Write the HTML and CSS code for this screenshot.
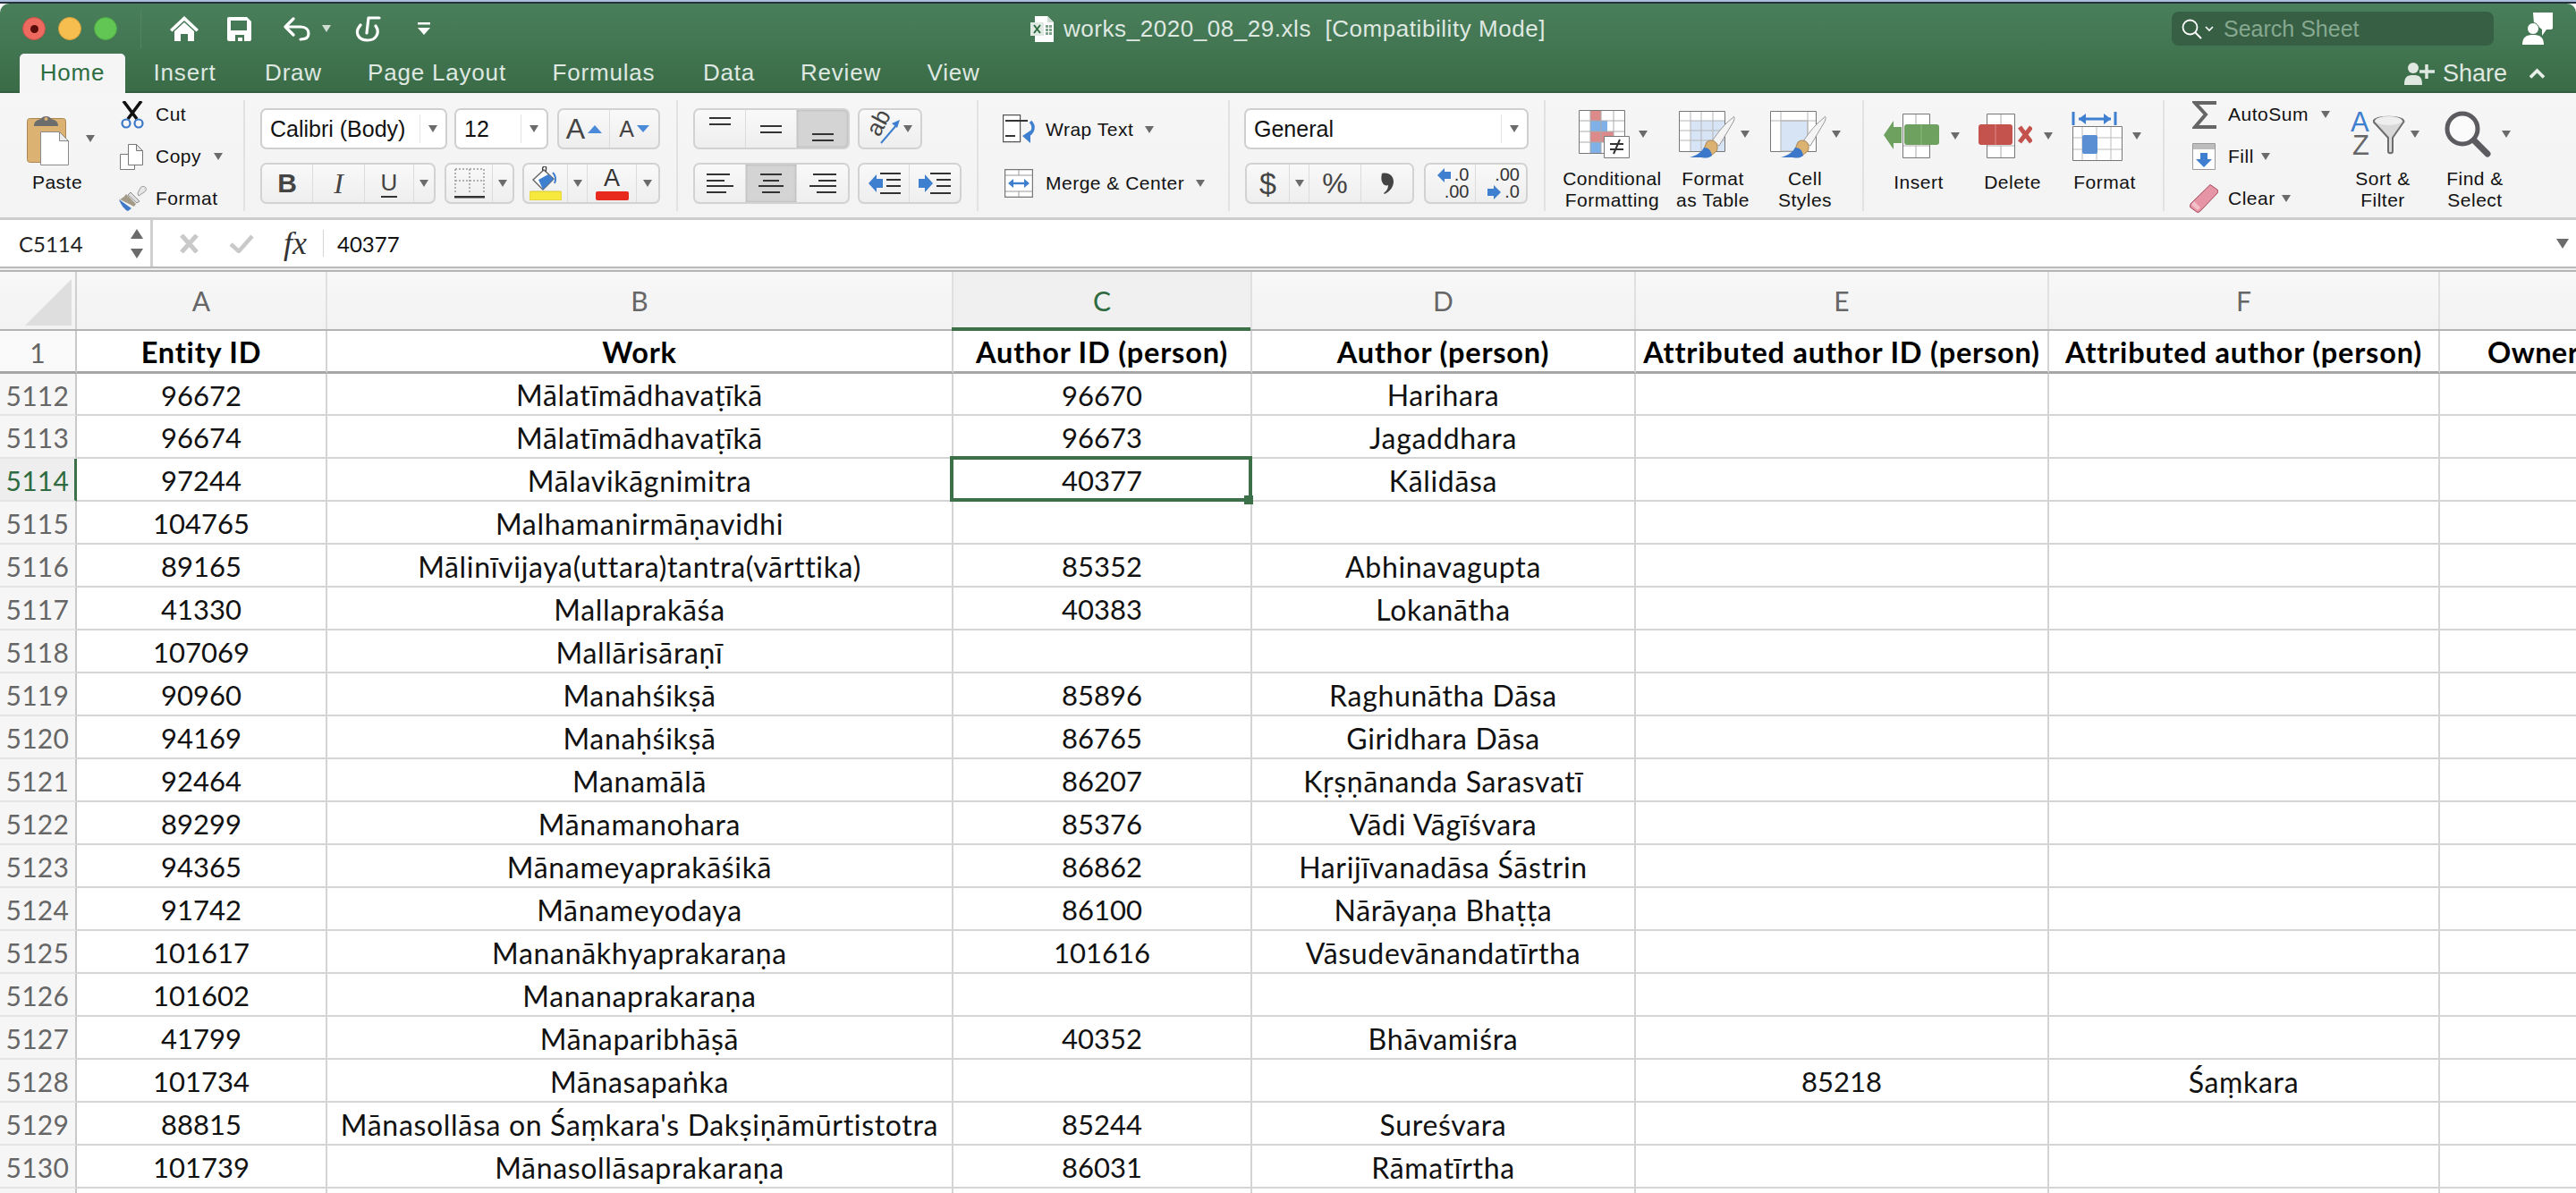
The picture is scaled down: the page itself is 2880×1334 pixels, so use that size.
FILE: index.html
```html
<!DOCTYPE html>
<html lang="en">
<head>
<meta charset="utf-8">
<title>works_2020_08_29.xls</title>
<link rel="stylesheet" href="styles.css">
</head>
<body>
<div class="topstrip"></div>
<header class="chrome">
  <div class="titlerow">
    <div class="qat">
      <span class="light red"><i></i></span><span class="light amber"></span><span class="light green"></span>
      <span class="qsep"></span>
      <svg class="q-home" width="32" height="28" viewBox="0 0 32 28"><path fill="#fff" d="M16 0 32 15l-2.500 2.500L16 5 2.500 17.500 0 15Z"/><path fill="#fff" d="M5 17 16 7l11 10v11h-7v-8h-8v8H5Z"/></svg>
      <svg class="q-save" width="27" height="27" viewBox="0 0 27 27"><path fill="#fff" fill-rule="evenodd" d="M2 0h20l5 5v20a2 2 0 0 1-2 2H2a2 2 0 0 1-2-2V2a2 2 0 0 1 2-2Zm2 4v11h18V4ZM9 20v7h3v-4h5v4h2v-7Z"/></svg>
      <svg class="q-undo" width="31" height="27" viewBox="0 0 31 27"><path fill="none" stroke="#fff" stroke-width="3.200" stroke-linecap="round" stroke-linejoin="round" d="M12 2 3 11l9 9M3 11h17c6 0 9 3.500 9 7.500S26 25 20 25"/></svg>
      <span class="caret caret-white q-car"></span>
      <svg class="q-redo" width="30" height="29" viewBox="0 0 30 29"><path fill="none" stroke="#fff" stroke-width="3.200" stroke-linecap="round" stroke-linejoin="round" d="M7 10C0 18 4 27 15 27c10 0 14-9 9-16M14 19 16 2h12"/></svg>
      <svg class="q-more" width="14" height="14" viewBox="0 0 14 14"><path fill="#fff" d="M0 0h14v2.500H0ZM0 6h14l-7 8Z"/></svg>
    </div>
    <div class="doctitle">
      <svg width="26" height="29" viewBox="0 0 26 29"><path fill="#fff" d="M5 0h14l7 7v22H5Z"/><path fill="#cfdcd2" d="M19 0v7h7Z"/><rect x="0" y="7" width="15" height="15" fill="#dfe8e1"/><path stroke="#2f6b41" stroke-width="2" fill="none" d="m4 10 7 9M11 10l-7 9"/><path fill="#7fa18a" d="M17 10h3v3h-3ZM21 10h3v3h-3ZM17 14h3v3h-3ZM21 14h3v3h-3ZM17 18h3v3h-3ZM21 18h3v3h-3Z"/></svg>
      <span class="doctext">works_2020_08_29.xls&nbsp; [Compatibility Mode]</span>
    </div>
    <div class="search">
      <svg width="24" height="23" viewBox="0 0 24 23"><circle cx="9.500" cy="9.500" r="8" fill="none" stroke="#fff" stroke-width="1.800"/><path stroke="#fff" stroke-width="2" d="m15 15 7 7"/></svg>
      <svg width="10" height="7" viewBox="0 0 10 7"><path fill="none" stroke="#fff" stroke-width="1.600" d="m1 1 4 4 4-4"/></svg>
      <span class="searchtext">Search Sheet</span>
    </div>
    <svg class="profile" width="34" height="36" viewBox="0 0 34 36"><path fill="#fff" d="M12 0h22v17a2 2 0 0 1-2 2h-5l-5 7v-7c-2-2-5-4-9-6.500Z"/><circle cx="12" cy="18" r="6.500" fill="#fff" stroke="#3f7350" stroke-width="1"/><path fill="#fff" d="M0 36c0-9 5-11 12-11s12 2 12 11Z"/></svg>
  </div>
  <div class="tabrow">
    <nav class="tabs">
      <span class="tab active">Home</span><span class="tab">Insert</span><span class="tab">Draw</span><span class="tab">Page Layout</span><span class="tab">Formulas</span><span class="tab">Data</span><span class="tab">Review</span><span class="tab">View</span>
    </nav>
    <div class="share">
      <svg width="34" height="25" viewBox="0 0 34 25"><circle cx="10" cy="6" r="6" fill="#e0e8e2"/><path fill="#e0e8e2" d="M0 25c0-9 3-11 10-11s10 2 10 11Z"/><path stroke="#e0e8e2" stroke-width="3.500" d="M25 2v16M17 10h17"/></svg>
      <span class="sharetext">Share</span>
      <svg class="sharechev" width="19" height="12" viewBox="0 0 19 12"><path fill="none" stroke="#e8eee9" stroke-width="3.600" d="m2 10.500 7.500-7.500 7.500 7.500"/></svg>
    </div>
  </div>
</header>

<section class="ribbon">
  <div class="group g-clip">
    <div class="big b-paste">
      <div class="bigicon">
        <svg width="47" height="59" viewBox="0 0 47 59"><rect x="0.500" y="6.500" width="43" height="49" rx="3" fill="#dcb273" stroke="#a98653"/><path fill="#6d6d6d" d="M8 15c0-5 3-7 8-8 1-4 10-4 11 0 5 1 8 3 8 8Z"/><circle cx="21.500" cy="7" r="2" fill="#dcb273"/><path fill="#fff" stroke="#8a8a8a" d="M15.500 21.500h21l10 10v27h-31Z"/><path fill="#eaeaea" stroke="#8a8a8a" d="M36.500 21.500v10h10Z"/></svg>
        <span class="caret c-paste"></span>
      </div>
      <span class="label">Paste</span>
    </div>
    <div class="smallcol">
      <div class="sbtn"><span class="slot"><svg width="28" height="31" viewBox="0 0 28 31"><path stroke="#111" stroke-width="3.600" d="m4 0 15 20M24 0 9 20"/><circle cx="7" cy="25" r="4.500" fill="none" stroke="#3a78c9" stroke-width="2.200"/><circle cx="21" cy="25" r="4.500" fill="none" stroke="#3a78c9" stroke-width="2.200"/></svg></span><span class="label">Cut</span></div>
      <div class="sbtn"><span class="slot"><svg width="26" height="29" viewBox="0 0 26 29"><path fill="#fff" stroke="#777" d="M.500 11.500h16v17H.500Z"/><path fill="#fff" stroke="#777" d="M9.500.500h9l7 7v16h-16Z"/><path fill="#e5e5e5" stroke="#777" d="M18.500.500v7h7Z"/></svg></span><span class="label">Copy</span><span class="caret c-copy"></span></div>
      <div class="sbtn"><span class="slot s-brush"><svg width="32" height="28" viewBox="0 0 32 28"><path fill="#e6e6e6" stroke="#999" d="m22 8 3-6c1-2 5-2 6 0s0 4-2 5l-6 4Z"/><path fill="#dcdcdc" stroke="#8f8f8f" d="M14 7 24 17l-3 2-10-9Z"/><path fill="#a49a88" d="M9 9 20 20l-2 3L2 15c3-2 5-3 7-6Z"/><path fill="#3f78c8" d="M1 15 15 25l-4 3C8 27 3 21 1 15Z"/></svg></span><span class="label">Format</span></div>
    </div>
  </div>

  <div class="group g-font">
    <div class="tworow">
      <div class="ctlrow">
        <div class="combo w-fname"><span class="combotext">Calibri (Body)</span><span class="combodrop"><span class="caret"></span></span></div>
        <div class="combo w-fsize"><span class="combotext">12</span><span class="combodrop"><span class="caret"></span></span></div>
        <div class="seg m-10">
          <span class="cell w-57"><span class="glyph-a">A</span><span class="tri-up"></span></span>
          <span class="cell w-54 nr"><span class="glyph-a2">A</span><span class="tri-down"></span></span>
        </div>
      </div>
      <div class="ctlrow">
        <div class="seg">
          <span class="cell w-57 biu-b">B</span><span class="cell w-58 biu-i">I</span><span class="cell w-55"><span class="biu-u">U</span></span><span class="cell w-22 nr"><span class="caret"></span></span>
        </div>
        <div class="seg m-10">
          <span class="cell w-52"><svg width="34" height="34" viewBox="0 0 34 34"><path fill="none" stroke="#9a9a9a" stroke-width="1.500" stroke-dasharray="2 2" d="M1 1h32v26M1 1v26M17 1v26M1 14h32"/><rect y="31" width="34" height="2.500" fill="#333"/></svg></span><span class="cell w-22 nr"><span class="caret"></span></span>
        </div>
        <div class="seg m-9">
          <span class="cell w-49"><svg width="36" height="38" viewBox="0 0 36 38"><path fill="#fff" stroke="#666" stroke-width="1.400" d="m4 15 12-11 11 10-12 12Z"/><path fill="#3f7fd0" d="m10 15 11-6 6 5-12 12Z"/><path fill="none" stroke="#444" stroke-width="1.400" d="M15 5c-1-3 0-5 2-5s2 2 1 6"/><path fill="none" stroke="#3f7fd0" stroke-width="2" d="M26 7c3 3 4 7 2 12"/><rect y="28" width="36" height="10" rx="1.500" fill="#f6e83c" stroke="#d9c92e"/></svg></span><span class="cell w-22"><span class="caret"></span></span><span class="cell w-55 col"><span class="glyph-fc">A</span><span class="redbar"></span></span><span class="cell w-24 nr"><span class="caret"></span></span>
        </div>
      </div>
    </div>
  </div>

  <div class="group g-align">
    <div class="tworow">
      <div class="ctlrow">
        <div class="seg">
          <span class="cell w-57"><svg width="24" height="30" viewBox="0 0 24 30"><path fill="#333" d="M0 2h24v2H0ZM0 9h24v2H0Z"/></svg></span>
          <span class="cell w-57"><svg width="24" height="30" viewBox="0 0 24 30"><path fill="#333" d="M0 11h24v2H0ZM0 18h24v2H0Z"/></svg></span>
          <span class="cell w-57 nr pressed end"><svg width="24" height="30" viewBox="0 0 24 30"><path fill="#333" d="M0 20h24v2H0ZM0 27h24v2H0Z"/></svg></span>
        </div>
        <div class="seg m-9">
          <span class="cell w-68 nr"><svg class="vis" width="38" height="42" viewBox="0 0 38 42"><text class="svgab" transform="translate(13 31) rotate(-62)" x="0" y="0">ab</text><path stroke="#3f7fd0" stroke-width="2" fill="none" d="m15 37 18-21"/><path fill="#3f7fd0" d="m36 11-9 4 6 5Z"/></svg><span class="caret ori"></span></span>
        </div>
      </div>
      <div class="ctlrow">
        <div class="seg">
          <span class="cell w-57"><svg width="30" height="24" viewBox="0 0 30 24"><path fill="#333" d="M0 1h26v2H0ZM0 8h20v2H0ZM0 14h30v2H0ZM0 21h22v2H0Z"/></svg></span>
          <span class="cell w-57 pressed"><svg width="30" height="24" viewBox="0 0 30 24"><path fill="#333" d="M3 1h24v2H3ZM6 8h18v2H6ZM1 14h28v2H1ZM5 21h20v2H5Z"/></svg></span>
          <span class="cell w-57 nr"><svg width="30" height="24" viewBox="0 0 30 24"><path fill="#333" d="M4 1h26v2H4ZM10 8h20v2H10ZM0 14h30v2H0ZM8 21h22v2H8Z"/></svg></span>
        </div>
        <div class="seg m-9">
          <span class="cell w-56"><svg width="36" height="26" viewBox="0 0 36 26"><path fill="#3f7fd0" d="M0 13 9 3v5h7v10H9v5Z"/><path fill="#333" d="M13 1h23v2H13ZM20 8h16v2H20ZM20 15h16v2H20ZM13 23h23v2H13Z"/></svg></span>
          <span class="cell w-56 nr"><svg width="36" height="26" viewBox="0 0 36 26"><path fill="#3f7fd0" d="M16 13 7 3v5H0v10h7v5Z"/><path fill="#333" d="M13 1h23v2H13ZM20 8h16v2H20ZM20 15h16v2H20ZM13 23h23v2H13Z"/></svg></span>
        </div>
      </div>
    </div>
  </div>

  <div class="group g-wrap">
    <div class="wrapcol">
      <div class="sbtn"><span class="slot s-48"><svg width="39" height="34" viewBox="0 0 39 34"><path fill="#fff" stroke="#555" stroke-width="1.200" d="M.600.600h19v30H.600Z"/><path stroke="#333" stroke-width="2" d="M3 7h25M3 24h11"/><path fill="none" stroke="#3f7fd0" stroke-width="3.500" d="M31 8c5 5 4 12-4 16"/><path fill="#3f7fd0" d="m22 24 9-6v14Z"/></svg></span><span class="label">Wrap Text</span><span class="caret c-wrap"></span></div>
      <div class="sbtn"><span class="slot s-48"><svg class="mergeic" width="32" height="32" viewBox="0 0 32 32"><path fill="#fff" stroke="#777" stroke-width="1.200" d="M.600.600h30.800v30.800H.600Z"/><path stroke="#999" d="M1 7h30M1 25h30M16 1v6M16 25v6"/><path stroke="#3f7fd0" stroke-width="2.400" d="M7 16h18"/><path fill="#3f7fd0" d="m4 16 6-5v10ZM28 16l-6-5v10Z"/></svg></span><span class="label">Merge &amp; Center</span><span class="caret c-merge"></span></div>
    </div>
  </div>

  <div class="group g-num">
    <div class="tworow">
      <div class="ctlrow">
        <div class="combo w-gen"><span class="combotext">General</span><span class="combodrop"><span class="caret"></span></span></div>
      </div>
      <div class="ctlrow r-1">
        <div class="seg">
          <span class="cell w-48 dollar">$</span><span class="cell w-22"><span class="caret"></span></span><span class="cell w-58 pct">%</span><span class="cell w-57 nr"><svg width="14" height="24" viewBox="0 0 14 24"><path fill="#444" d="M1 1c8-2 13 3 13 9 0 6-4 11-10 14l-1-1c4-3 5-6 5-9-2 1-5 0-6-2C0 9 0 6 1 1Z"/></svg></span>
        </div>
        <div class="seg m-11">
          <span class="cell w-56 dec">
            <span class="decrow"><svg width="15" height="16" viewBox="0 0 15 16"><path fill="#3f7fd0" d="M0 8 8 0v4h7v8H8v4Z"/></svg><span>.0</span></span>
            <span class="decrow">.00</span>
          </span>
          <span class="cell w-56 nr dec">
            <span class="decrow">.00</span>
            <span class="decrow"><svg width="15" height="16" viewBox="0 0 15 16"><path fill="#3f7fd0" d="M15 8 7 0v4H0v8h7v4Z"/></svg><span>.0</span></span>
          </span>
        </div>
      </div>
    </div>
  </div>

  <div class="group g-styles">
    <div class="big b-cf">
      <div class="bigicon">
        <svg width="57" height="54" viewBox="0 0 57 54"><path fill="#fff" stroke="#777" d="M.500.500h51v48H.500Z"/><path fill="#dd8a8a" d="M13 1h12v11H13ZM13 24h26v12H13Z"/><path fill="#7fb0e8" d="M13 12h19v12H13ZM13 36h12v12H13Z"/><path stroke="#aaa" d="M1 12h50M1 24h50M1 36h50M13 1v47M25 1v47M39 1v47"/><path fill="#fff" stroke="#777" d="M28.500 29.500h28v24h-28Z"/><path stroke="#333" stroke-width="2" d="M35 38h15M35 44h15M46 33l-7 16"/></svg>
        <span class="caret"></span>
      </div>
      <span class="label two">Conditional<br>Formatting</span>
    </div>
    <div class="big b-ft">
      <div class="bigicon">
        <svg width="63" height="53" viewBox="0 0 63 53"><path fill="#fff" stroke="#777" d="M.500.500h51v45H.500Z"/><path fill="#d6e4f5" d="M13 11h38v34H13Z"/><path stroke="#b5b5b5" d="M1 11h50M1 22h50M1 33h50M13 1v44M25 1v44M38 1v44"/><path fill="#f4f4f4" stroke="#999" d="M60 8c2-4 3 0 1 4L45 39l-8-5C45 22 52 14 60 8Z"/><path fill="#dcb273" stroke="#a98653" d="M31 35c3-3 8-2 10 0s3 7 1 10l-6 5-9-5Z"/><path fill="#3b78c9" d="M28 41c5 0 8 3 9 9-4 3-7 3-12 2H12c7-2 13-5 16-11Z"/></svg>
        <span class="caret"></span>
      </div>
      <span class="label two">Format<br>as Table</span>
    </div>
    <div class="big b-cs">
      <div class="bigicon">
        <svg width="63" height="53" viewBox="0 0 63 53"><path fill="#fff" stroke="#777" d="M.500.500h51v45H.500Z"/><path fill="#d6e4f5" stroke="#b5b5b5" d="M12 11h30v34H12Z"/><path stroke="#b5b5b5" d="M1 11h50M12 1v10M42 1v44"/><path fill="#f4f4f4" stroke="#999" d="M60 8c2-4 3 0 1 4L45 39l-8-5C45 22 52 14 60 8Z"/><path fill="#dcb273" stroke="#a98653" d="M31 35c3-3 8-2 10 0s3 7 1 10l-6 5-9-5Z"/><path fill="#3b78c9" d="M28 41c5 0 8 3 9 9-4 3-7 3-12 2H12c7-2 13-5 16-11Z"/></svg>
        <span class="caret"></span>
      </div>
      <span class="label two">Cell<br>Styles</span>
    </div>
  </div>

  <div class="group g-cells">
    <div class="big b-ins">
      <div class="bigicon">
        <svg width="62" height="50" viewBox="0 0 62 50"><path fill="#fff" stroke="#777" d="M21.500.500h30v49h-30Z"/><path stroke="#aaa" d="M22 36h29M36 1v11M36 36v13"/><path fill="#6ea060" d="M11 8v7h9v18h-9v7L0 24Z"/><rect x="23" y="12" width="39" height="23" rx="3" fill="#6ea060"/><path stroke="#8dba80" d="M42 12v23"/></svg>
        <span class="caret"></span>
      </div>
      <span class="label">Insert</span>
    </div>
    <div class="big b-del">
      <div class="bigicon">
        <svg width="60" height="50" viewBox="0 0 60 50"><path fill="#fff" stroke="#777" d="M9.500.500h31v49h-31Z"/><path stroke="#aaa" d="M10 36h30M25 1v11M25 36v13"/><rect y="12" width="38" height="23" rx="3" fill="#c4534e"/><path stroke="#dd8a84" d="M19 12v23"/><path stroke="#c4534e" stroke-width="5" d="m46 15 13 17M59 15 46 32"/></svg>
        <span class="caret"></span>
      </div>
      <span class="label">Delete</span>
    </div>
    <div class="big b-fmt">
      <div class="bigicon">
        <svg width="57" height="55" viewBox="0 0 57 55"><path stroke="#3f7fd0" stroke-width="3" d="M2 0v15M49 0v15M8 8h36"/><path fill="#3f7fd0" d="m8 8 8-6v12ZM44 8l-8-6v12Z"/><path fill="#fff" stroke="#777" d="M1.500 16.500h55v38h-55Z"/><path stroke="#bbb" d="M2 29h54M2 42h54M12 17v37M28 17v37M44 17v37"/><rect x="12" y="26" width="17" height="21" rx="2" fill="#5b8fd4"/></svg>
        <span class="caret"></span>
      </div>
      <span class="label">Format</span>
    </div>
  </div>

  <div class="group g-edit">
    <div class="smallcol c-edit">
      <div class="sbtn"><span class="slot s-43"><svg width="27" height="31" viewBox="0 0 27 31"><path fill="none" stroke="#666" stroke-width="4" d="M27 2H3l12 13L3 29h24"/></svg></span><span class="label">AutoSum</span><span class="caret c-auto"></span></div>
      <div class="sbtn"><span class="slot s-43"><svg width="26" height="30" viewBox="0 0 26 30"><path fill="#fff" stroke="#999" d="M.500.500h25v29h-25Z"/><rect x="1" y="1" width="24" height="6" fill="#bdbdbd"/><path fill="#3f7fd0" d="M9 11h8v7h5l-9 9-9-9h5Z"/></svg></span><span class="label">Fill</span><span class="caret c-fill"></span></div>
      <div class="sbtn"><span class="slot s-43 s-up"><svg width="32" height="32" viewBox="0 0 32 32"><path fill="#e595a5" stroke="#a8475e" d="M23 .500 31 6c1 1 1 3 0 4L12 30c-1 1-3 2-4 1L1 26c-1-1 0-3 0-4Z"/><path fill="#f4c0ca" d="M2 23 9 29 12 26 5 19Z"/></svg></span><span class="label">Clear</span><span class="caret c-clear"></span></div>
    </div>
    <div class="big b-sort">
      <div class="bigicon">
        <span class="az"><span class="az-a">A</span><span class="az-z">Z</span></span>
        <svg width="36" height="48" viewBox="25 0 36 48"><path fill="#d9d9d9" stroke="#6d6d6d" stroke-width="2" d="M25.500 10c0-7 34-7 34 0L47 28v15c0 3-5 3-5 0V28Z"/><ellipse cx="42.500" cy="9" rx="15" ry="5" fill="#eee"/></svg>
        <span class="caret"></span>
      </div>
      <span class="label two">Sort &amp;<br>Filter</span>
    </div>
    <div class="big b-find">
      <div class="bigicon">
        <svg width="52" height="52" viewBox="0 0 52 52"><circle cx="20" cy="20" r="17" fill="#fbfbfb" stroke="#5c5c60" stroke-width="5"/><path stroke="#5c5c60" stroke-width="7" stroke-linecap="round" d="m33 33 15 15"/></svg>
        <span class="caret"></span>
      </div>
      <span class="label two">Find &amp;<br>Select</span>
    </div>
  </div>
</section>

<section class="formulabar">
  <div class="namebox">
    <span class="nametext">C5114</span>
    <span class="spinner"><span class="spin-up"></span><span class="spin-down"></span></span>
  </div>
  <div class="fbtns">
    <svg width="23" height="21" viewBox="0 0 23 21"><path stroke="#c9c9c9" stroke-width="5" d="m3 1 17 19M20 1 3 20"/></svg>
    <svg class="fb-check" width="28" height="21" viewBox="0 0 28 21"><path fill="none" stroke="#c9c9c9" stroke-width="4.500" d="m2 11 9 8L26 2"/></svg>
    <span class="fx">fx</span>
    <span class="fbsep"></span>
  </div>
  <div class="fvalue">40377</div>
  <span class="caret f-caret"></span>
</section>
<div class="gap"></div>

<main class="sheet">
  <div class="row colhead">
    <div class="hc corner"><span class="tri"></span></div>
    <div class="hc">A</div><div class="hc">B</div><div class="hc sel">C</div><div class="hc">D</div><div class="hc">E</div><div class="hc">F</div><div class="hc"></div>
  </div>
  <div class="row r-head">
    <div class="rh">1</div>
    <div class="c">Entity ID</div><div class="c">Work</div><div class="c">Author ID (person)</div><div class="c">Author (person)</div><div class="c">Attributed author ID (person)</div><div class="c">Attributed author (person)</div><div class="c owner">Owner</div>
  </div>
  <div class="row"><div class="rh">5112</div><div class="c">96672</div><div class="c">Mālatīmādhavaṭīkā</div><div class="c">96670</div><div class="c">Harihara</div><div class="c"></div><div class="c"></div><div class="c"></div></div>
  <div class="row"><div class="rh">5113</div><div class="c">96674</div><div class="c">Mālatīmādhavaṭīkā</div><div class="c">96673</div><div class="c">Jagaddhara</div><div class="c"></div><div class="c"></div><div class="c"></div></div>
  <div class="row"><div class="rh rh-sel">5114</div><div class="c">97244</div><div class="c">Mālavikāgnimitra</div><div class="c active-cell">40377</div><div class="c">Kālidāsa</div><div class="c"></div><div class="c"></div><div class="c"></div></div>
  <div class="row"><div class="rh">5115</div><div class="c">104765</div><div class="c">Malhamanirmāṇavidhi</div><div class="c"></div><div class="c"></div><div class="c"></div><div class="c"></div><div class="c"></div></div>
  <div class="row"><div class="rh">5116</div><div class="c">89165</div><div class="c">Mālinīvijaya(uttara)tantra(vārttika)</div><div class="c">85352</div><div class="c">Abhinavagupta</div><div class="c"></div><div class="c"></div><div class="c"></div></div>
  <div class="row"><div class="rh">5117</div><div class="c">41330</div><div class="c">Mallaprakāśa</div><div class="c">40383</div><div class="c">Lokanātha</div><div class="c"></div><div class="c"></div><div class="c"></div></div>
  <div class="row"><div class="rh">5118</div><div class="c">107069</div><div class="c">Mallārisāraṇī</div><div class="c"></div><div class="c"></div><div class="c"></div><div class="c"></div><div class="c"></div></div>
  <div class="row"><div class="rh">5119</div><div class="c">90960</div><div class="c">Manahśikṣā</div><div class="c">85896</div><div class="c">Raghunātha Dāsa</div><div class="c"></div><div class="c"></div><div class="c"></div></div>
  <div class="row"><div class="rh">5120</div><div class="c">94169</div><div class="c">Manaḥśikṣā</div><div class="c">86765</div><div class="c">Giridhara Dāsa</div><div class="c"></div><div class="c"></div><div class="c"></div></div>
  <div class="row"><div class="rh">5121</div><div class="c">92464</div><div class="c">Manamālā</div><div class="c">86207</div><div class="c">Kṛṣṇānanda Sarasvatī</div><div class="c"></div><div class="c"></div><div class="c"></div></div>
  <div class="row"><div class="rh">5122</div><div class="c">89299</div><div class="c">Mānamanohara</div><div class="c">85376</div><div class="c">Vādi Vāgīśvara</div><div class="c"></div><div class="c"></div><div class="c"></div></div>
  <div class="row"><div class="rh">5123</div><div class="c">94365</div><div class="c">Mānameyaprakāśikā</div><div class="c">86862</div><div class="c">Harijīvanadāsa Śāstrin</div><div class="c"></div><div class="c"></div><div class="c"></div></div>
  <div class="row"><div class="rh">5124</div><div class="c">91742</div><div class="c">Mānameyodaya</div><div class="c">86100</div><div class="c">Nārāyaṇa Bhaṭṭa</div><div class="c"></div><div class="c"></div><div class="c"></div></div>
  <div class="row"><div class="rh">5125</div><div class="c">101617</div><div class="c">Mananākhyaprakaraṇa</div><div class="c">101616</div><div class="c">Vāsudevānandatīrtha</div><div class="c"></div><div class="c"></div><div class="c"></div></div>
  <div class="row"><div class="rh">5126</div><div class="c">101602</div><div class="c">Mananaprakaraṇa</div><div class="c"></div><div class="c"></div><div class="c"></div><div class="c"></div><div class="c"></div></div>
  <div class="row"><div class="rh">5127</div><div class="c">41799</div><div class="c">Mānaparibhāṣā</div><div class="c">40352</div><div class="c">Bhāvamiśra</div><div class="c"></div><div class="c"></div><div class="c"></div></div>
  <div class="row"><div class="rh">5128</div><div class="c">101734</div><div class="c">Mānasapaṅka</div><div class="c"></div><div class="c"></div><div class="c">85218</div><div class="c">Śaṃkara</div><div class="c"></div></div>
  <div class="row"><div class="rh">5129</div><div class="c">88815</div><div class="c">Mānasollāsa on Śaṃkara's Dakṣiṇāmūrtistotra</div><div class="c">85244</div><div class="c">Sureśvara</div><div class="c"></div><div class="c"></div><div class="c"></div></div>
  <div class="row"><div class="rh">5130</div><div class="c">101739</div><div class="c">Mānasollāsaprakaraṇa</div><div class="c">86031</div><div class="c">Rāmatīrtha</div><div class="c"></div><div class="c"></div><div class="c"></div></div>
  <div class="row"><div class="rh"></div><div class="c"></div><div class="c"></div><div class="c"></div><div class="c"></div><div class="c"></div><div class="c"></div><div class="c"></div></div>
</main>
</body>
</html>
```
FILE: styles.css
```css
* { box-sizing: border-box; }
html, body { margin: 0; padding: 0; height: 100%; overflow: hidden; background: #fff; }
body { width: 2880px; height: 1334px; font-family: "Liberation Sans", Arial, sans-serif; color: #111; }

.topstrip { height: 4px; background: linear-gradient(#a9bfdb 0 2px, #27313a 2px 4px); }

.chrome { height: 100px; background: linear-gradient(#4a7f5b, #3a6b47); border-radius: 10px 10px 0 0; box-shadow: inset 0 -2px 0 #335f40; }
.titlerow { height: 56px; display: flex; align-items: center; }
.qat { width: 1152px; display: flex; align-items: center; padding-left: 25px; }
.light { width: 26px; height: 26px; border-radius: 50%; margin-right: 14px; display: flex; align-items: center; justify-content: center; }
.light.red { background: #ee6a5f; border: 1px solid #c9504a; }
.light.red i { width: 9px; height: 9px; border-radius: 50%; background: #5a0c08; }
.light.amber { background: #f6bd4f; border: 1px solid #d9a03b; }
.light.green { background: #62c655; border: 1px solid #4da844; }
.qsep { width: 1px; height: 44px; background: #52845f; margin-left: 12px; margin-right: 32px; }
.q-save { margin-left: 32px; }
.q-undo { margin-left: 35px; }
.q-car { margin-left: 13px; }
.q-redo { margin-left: 26px; }
.q-more { margin-left: 41px; }
.doctitle { width: 1276px; display: flex; align-items: center; }
.doctext { margin-left: 11px; font-size: 26px; letter-spacing: .55px; color: #dfe8e1; white-space: nowrap; }
.search { width: 360px; height: 38px; background: #375f44; border-radius: 8px; display: flex; align-items: center; padding-left: 11px; gap: 2px; }
.searchtext { margin-left: 9px; font-size: 25px; color: #86a890; font-weight: 400; white-space: nowrap; }
.profile { margin-left: 32px; }

.tabrow { height: 44px; display: flex; align-items: stretch; }
.tabs { margin-left: 22px; display: grid; grid-template-columns: 118px 133px 110px 211px 162px 118px 132px 120px; }
.tab { display: flex; align-items: center; justify-content: center; padding-bottom: 2px; font-size: 26px; letter-spacing: .8px; color: #dfe8e1; }
.tab.active { background: #f5f5f5; color: #2c6e42; border-radius: 5px 5px 0 0; }
.share { margin-left: auto; display: flex; align-items: center; padding-right: 34px; }
.sharetext { margin-left: 9px; font-size: 27px; color: #e0e8e2; }
.sharechev { margin-left: 24px; }

.ribbon { height: 142px; display: flex; background: linear-gradient(#f6f6f6, #f3f3f3); border-bottom: 3px solid #cdcdcd; padding: 8px 0 7px; }
.group { height: 124px; border-right: 2px solid #e2e2e2; display: flex; flex: none; }
.g-clip { width: 274px; padding-left: 22px; }
.g-font { width: 484px; padding-left: 17px; }
.g-align { width: 336px; padding-left: 17px; }
.g-wrap { width: 281px; padding-left: 27px; }
.g-num { width: 353px; padding-left: 16px; }
.g-styles { width: 356px; padding-left: 19px; }
.g-cells { width: 336px; padding-left: 11px; }
.g-edit { width: 461px; padding-left: 28px; border-right: 0; }

.label { font-size: 21px; letter-spacing: .5px; line-height: 24px; color: #111; white-space: nowrap; }
.label.two { text-align: center; }

.caret { flex: none; display: inline-block; width: 0; height: 0; border-left: 5px solid transparent; border-right: 5px solid transparent; border-top: 8px solid #6b6b6b; }
.caret-white { border-top-color: #cfdcd3; }

.big { display: flex; flex-direction: column; align-items: center; flex: none; height: 124px; }
.bigicon { width: 100%; height: 80px; display: flex; align-items: center; }
.b-paste { width: 84px; }
.b-paste .bigicon { padding: 6px 0 0 8px; }
.c-paste { margin-left: 19px; }
.b-cf { width: 111px; } .b-cf .bigicon { padding-left: 18px; gap: 10px; }
.b-ft { width: 114px; } .b-ft .bigicon { padding-left: 19px; gap: 6px; }
.b-cs { width: 92px; } .b-cs .bigicon { padding-left: 7px; gap: 6px; }
.b-ins { width: 100px; } .b-ins .bigicon { padding-left: 11px; gap: 13px; }
.b-del { width: 110px; } .b-del .bigicon { padding-left: 17px; gap: 13px; }
.b-fmt { width: 96px; } .b-fmt .bigicon { padding-left: 11px; gap: 11px; }
.b-sort { width: 104px; } .b-sort .bigicon { padding-left: 16px; }
.b-sort .caret { margin-left: 6px; }
.b-find { width: 102px; } .b-find .bigicon { padding-left: 17px; gap: 12px; }
.az { width: 25px; display: flex; flex-direction: column; font-size: 31px; line-height: 26px; }
.az-a { color: #3f7fd0; }
.az-z { color: #666; padding-left: 2px; }

.smallcol { display: flex; flex-direction: column; gap: 15px; margin-left: 26px; }
.c-edit { width: 164px; margin-left: 0; }
.sbtn { height: 32px; display: flex; align-items: center; flex: none; }
.slot { flex: none; width: 42px; display: flex; align-items: center; padding-left: 2px; }
.s-brush { padding-left: 0; }
.s-43 { width: 43px; padding-left: 3px; }
.s-up { padding-left: 0; }
.s-48 { width: 48px; padding-left: 0; }
.mergeic { margin-left: 2px; }
.c-copy { margin-left: 14px; }
.c-wrap { margin-left: 13px; }
.c-merge { margin-left: 13px; }
.c-auto { margin-left: 14px; }
.c-fill { margin-left: 8px; }
.c-clear { margin-left: 7px; }
.wrapcol { display: flex; flex-direction: column; gap: 28px; padding-top: 17px; }

.tworow { display: flex; flex-direction: column; gap: 15px; padding-top: 9px; }
.ctlrow { display: flex; height: 46px; flex: none; }
.combo { height: 46px; display: flex; align-items: center; background: #fff; border: 2px solid #cfcfcf; border-radius: 7px; flex: none; }
.combotext { flex: 1; padding-left: 9px; font-size: 25px; color: #111; white-space: nowrap; }
.combodrop { width: 29px; height: 32px; border-left: 1px solid #e4e4e4; display: flex; align-items: center; justify-content: center; flex: none; }
.w-fname { width: 209px; margin-right: 8px; }
.w-fsize { width: 105px; }
.w-gen { width: 318px; }
.r-1 { margin-left: 1px; }

.seg { height: 46px; display: flex; flex: none; border: 2px solid #d2d2d2; border-radius: 7px; background: linear-gradient(#f9f9f9, #eeeeee); }
.m-9 { margin-left: 9px; }
.m-10 { margin-left: 10px; }
.m-11 { margin-left: 11px; }
.cell { height: 100%; display: flex; align-items: center; justify-content: center; border-right: 1px solid #dcdcdc; flex: none; }
.cell.nr { border-right: 0; }
.cell.pressed { background: #d4d4d4; box-shadow: inset 0 0 3px #aaa; }
.cell.end { border-radius: 0 5px 5px 0; }
.cell.col { flex-direction: column; }
.cell.dec { flex-direction: column; }
.decrow { height: 19px; display: flex; align-items: center; justify-content: flex-end; width: 42px; font-size: 20px; line-height: 19px; color: #333; }
.decrow svg { margin-right: 4px; }
.w-22 { width: 22px; } .w-24 { width: 24px; } .w-48 { width: 48px; } .w-49 { width: 49px; } .w-52 { width: 52px; }
.w-54 { width: 54px; } .w-55 { width: 55px; } .w-56 { width: 56px; } .w-57 { width: 57px; } .w-58 { width: 58px; } .w-68 { width: 68px; }
.vis { overflow: visible; }

.glyph-a { font-size: 32px; color: #444; }
.glyph-a2 { font-size: 25px; color: #444; }
.tri-up { margin-left: 3px; width: 0; height: 0; border-left: 8px solid transparent; border-right: 8px solid transparent; border-bottom: 9px solid #4a8ad8; }
.tri-down { margin-left: 3px; width: 0; height: 0; border-left: 7px solid transparent; border-right: 7px solid transparent; border-top: 8px solid #4a8ad8; }
.biu-b { font-size: 30px; font-weight: 700; color: #444; }
.biu-i { font-family: "Liberation Serif", serif; font-style: italic; font-size: 32px; color: #444; }
.biu-u { font-size: 26px; color: #444; border-bottom: 2px solid #333; line-height: 30px; }
.glyph-fc { font-size: 27px; line-height: 30px; color: #333; margin-top: -3px; }
.redbar { width: 37px; height: 10px; background: #e8291e; border-radius: 2px; }
.ori { margin-left: 2px; }
.svgab { font-size: 26px; fill: #444; }
.dollar { font-size: 34px; color: #444; }
.pct { font-size: 32px; color: #444; }

.formulabar { height: 54px; display: flex; align-items: center; border-bottom: 2px solid #b9b9b9; background: #fff; }
.namebox { width: 171px; height: 52px; border-right: 3px solid #cfcfcf; display: flex; align-items: center; justify-content: space-between; padding: 0 8px 0 21px; flex: none; }
.nametext { font-family: Lato, "Noto Sans", sans-serif; font-size: 24px; color: #222; }
.spinner { display: flex; flex-direction: column; gap: 11px; }
.spin-up { width: 0; height: 0; border-left: 7px solid transparent; border-right: 7px solid transparent; border-bottom: 11px solid #6b6b6b; }
.spin-down { width: 0; height: 0; border-left: 7px solid transparent; border-right: 7px solid transparent; border-top: 11px solid #6b6b6b; }
.fbtns { display: flex; align-items: center; padding-left: 29px; }
.fb-check { margin-left: 33px; }
.fx { margin-left: 33px; width: 44px; font-family: "Liberation Serif", serif; font-style: italic; font-size: 36px; line-height: 40px; color: #333; }
.fbsep { width: 1px; height: 30px; background: #d5d5d5; }
.fvalue { margin-left: 15px; font-family: Lato, "Noto Sans", sans-serif; font-size: 24px; color: #111; }
.f-caret { margin-left: auto; margin-right: 8px; border-left-width: 7px; border-right-width: 7px; border-top-width: 11px; }

.gap { height: 4px; background: #eeeeee; border-bottom: 2px solid #b5b5b5; }

.sheet { font-family: Lato, "Noto Sans", sans-serif; font-size: 30px; }
.row { display: grid; grid-template-columns: 86px 280px 700px 334px 429px 462px 437px 152px; height: 48px; }
.row:nth-child(3) { height: 47px; }
.colhead { height: 66px; background: linear-gradient(#f8f8f8, #f2f2f2); border-bottom: 2px solid #b3b3b3; }
.r-head { height: 48px; }
.hc { display: flex; align-items: center; justify-content: center; color: #666; border-right: 2px solid #e0e0e0; }
.hc:last-child { border-right: 0; }
.hc.corner { align-items: flex-start; justify-content: flex-start; padding: 8px 0 0 28px; border-right: 2px solid #d0d0d0; }
.tri { width: 52px; height: 52px; background: #dedede; clip-path: polygon(100% 0, 100% 100%, 0 100%); }
.hc.sel { background: #f0f0f0; color: #2f6b41; position: relative; }
.hc.sel::after { content: ""; position: absolute; left: -2px; right: 0; bottom: -2px; height: 4px; background: #3c7049; }
.rh { display: flex; align-items: center; justify-content: flex-end; padding: 2px 7px 0 0; letter-spacing: .2px; color: #666; background: #f6f6f6; border-right: 2px solid #c9c9c9; border-bottom: 2px solid #e3e3e3; }
.rh-sel { color: #2f6b41; background: #eeeeee; border-right: 3px solid #3c7049; padding-right: 6px; }
.c { display: flex; align-items: center; justify-content: center; padding-top: 2px; font-size: 32px; letter-spacing: .68px; white-space: nowrap; color: #111; border-right: 2px solid #d4d4d4; border-bottom: 2px solid #d4d4d4; }
.c:last-child { border-right: 0; }
.c:nth-child(2), .c:nth-child(4), .c:nth-child(6) { font-size: 31px; letter-spacing: 0; }
.r-head .rh { justify-content: center; padding-right: 0; border-bottom: 3px solid #a6a6a6; background: #fafafa; }
.r-head .c { font-size: 32.500px; letter-spacing: .8px; font-weight: 700; color: #000; border-bottom: 3px solid #a6a6a6; }
.r-head .owner { justify-content: flex-start; padding-left: 53px; letter-spacing: .4px; }
.active-cell { position: relative; }
.active-cell::after { content: ""; position: absolute; left: -4px; right: -2px; top: -3px; bottom: -2px; border: 4px solid #3c7049; }
.active-cell::before { content: ""; position: absolute; right: -3px; bottom: -5px; width: 10px; height: 10px; background: #3c7049; z-index: 1; }
```
